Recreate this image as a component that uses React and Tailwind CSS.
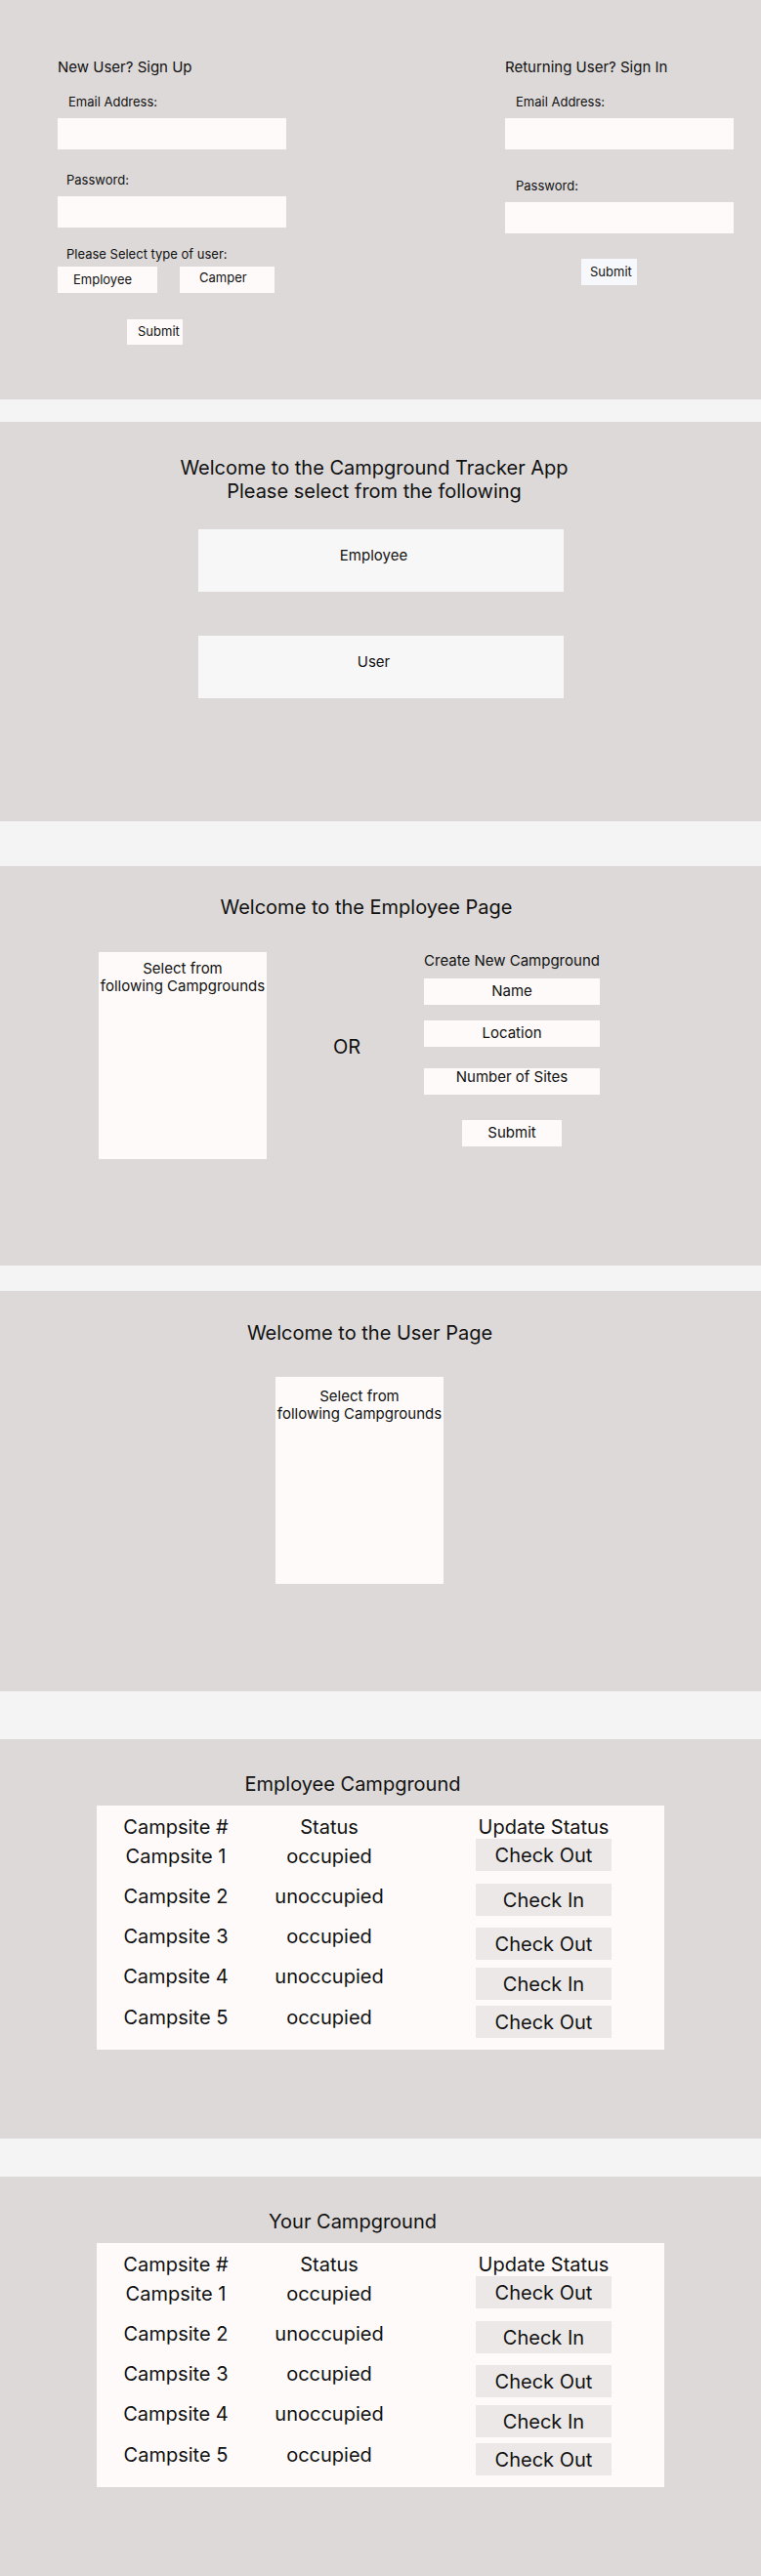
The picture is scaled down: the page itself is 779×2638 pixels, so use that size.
const rows = [
  { site: 'Campsite 1', status: 'occupied', action: 'Check Out', mt: 'mt-0', tmt: 'mt-[6px]' },
  { site: 'Campsite 2', status: 'unoccupied', action: 'Check In', mt: 'mt-[13px]', tmt: 'mt-[1px]' },
  { site: 'Campsite 3', status: 'occupied', action: 'Check Out', mt: 'mt-[12px]', tmt: '-mt-[3px]' },
  { site: 'Campsite 4', status: 'unoccupied', action: 'Check In', mt: 'mt-[8px]', tmt: '-mt-[3px]' },
  { site: 'Campsite 5', status: 'occupied', action: 'Check Out', mt: 'mt-[6px]', tmt: 'mt-0' },
]

function CampTable({ title }) {
  return (
    <section className="h-[409px] bg-[#dcd9d8] pt-[34px]">
      <h2 className="text-center pr-[57px] text-[20px] leading-[24px]">{title}</h2>
      <div className="mt-[10px] ml-[99px] w-[581px] h-[250px] bg-[#fdfaf9] flex flex-col">
        <div className="mt-[10px] flex text-[20px] leading-[24px]">
          <div className="w-[162px] text-center">Campsite #</div>
          <div className="w-[152px] text-center">Status</div>
          <div className="ml-[74px] w-[139px] text-center">Update Status</div>
        </div>
        {rows.map((r) => (
          <div key={r.site} className={`${r.mt} flex items-start text-[20px] leading-[24px]`}>
            <div className={`${r.tmt} w-[162px] text-center`}>{r.site}</div>
            <div className={`${r.tmt} w-[152px] text-center`}>{r.status}</div>
            <button className="ml-[74px] w-[139px] h-[33px] bg-[#ebe8e7] text-center">{r.action}</button>
          </div>
        ))}
      </div>
    </section>
  )
}

export default function App() {
  return (
    <div className="w-[779px] font-['Inter',sans-serif] text-[#111111] bg-[#f4f4f4]">
      {/* sign up / sign in */}
      <section className="h-[409px] bg-[#dcd9d8] flex pt-[57px]">
        <div className="ml-[59px] w-[234px] flex flex-col items-start">
          <h2 className="text-[15px] leading-[24px]">New User? Sign Up</h2>
          <label className="mt-[13px] ml-[11px] text-[13px] leading-[20px]">Email Address:</label>
          <div className="mt-[7px] h-[32px] w-full bg-[#fdfaf9]" />
          <label className="mt-[21px] ml-[9px] text-[13px] leading-[20px]">Password:</label>
          <div className="mt-[7px] h-[32px] w-full bg-[#fdfaf9]" />
          <label className="mt-[17px] ml-[9px] text-[13px] leading-[20px]">Please Select type of user:</label>
          <div className="mt-[3px] flex gap-[23px] text-[13px]">
            <button className="w-[102px] h-[27px] pl-[16px] text-left bg-[#fdfaf9]">Employee</button>
            <button className="w-[97px] h-[27px] pl-[20px] pb-[4px] text-left bg-[#fdfaf9]">Camper</button>
          </div>
          <button className="mt-[27px] ml-[71px] w-[57px] h-[26px] pl-[11px] text-left text-[13px] bg-[#fdfaf9]">Submit</button>
        </div>
        <div className="ml-[224px] w-[234px] flex flex-col items-start">
          <h2 className="text-[15px] leading-[24px]">Returning User? Sign In</h2>
          <label className="mt-[13px] ml-[11px] text-[13px] leading-[20px]">Email Address:</label>
          <div className="mt-[7px] h-[32px] w-full bg-[#fdfaf9]" />
          <label className="mt-[27px] ml-[11px] text-[13px] leading-[20px]">Password:</label>
          <div className="mt-[7px] h-[32px] w-full bg-[#fdfaf9]" />
          <button className="mt-[26px] ml-[78px] w-[57px] h-[27px] pl-[9px] text-left text-[13px] bg-[#f7f8fc]">Submit</button>
        </div>
      </section>
      <div className="h-[23px]" />

      {/* landing */}
      <section className="h-[409px] bg-[#dcd9d8] pt-[35px]">
        <h1 className="text-center pr-[13px] text-[20px] leading-[24px]">
          Welcome to the Campground Tracker App
          <br />
          Please select from the following
        </h1>
        <button className="mt-[27px] mx-auto block w-[374px] h-[64px] bg-[#f8f7f7] pt-[15px] pr-[14px] text-[15px] leading-[24px] text-center">
          <span className="block">Employee</span>
          <span className="block h-[25px]" />
        </button>
        <button className="mt-[45px] mx-auto block w-[374px] h-[64px] bg-[#f8f7f7] pt-[15px] pr-[14px] text-[15px] leading-[24px] text-center">
          <span className="block">User</span>
          <span className="block h-[25px]" />
        </button>
      </section>
      <div className="h-[46px]" />

      {/* employee page */}
      <section className="h-[409px] bg-[#dcd9d8] pt-[30px]">
        <h1 className="text-center pr-[29px] text-[20px] leading-[24px]">Welcome to the Employee Page</h1>
        <div className="mt-[33px] flex items-start">
          <div className="mt-[1px] ml-[101px] w-[172px] h-[212px] bg-[#fdfaf9] pt-[8px] text-center text-[15px] leading-[18px]">
            Select from
            <br />
            following Campgrounds
          </div>
          <div className="mt-[86px] ml-[68px] w-[28px] text-[20px] leading-[24px]">OR</div>
          <div className="ml-[65px] w-[180px] flex flex-col text-[15px]">
            <div className="leading-[20px] text-center">Create New Campground</div>
            <div className="mt-[8px] h-[27px] bg-[#fdfaf9] flex items-center justify-center">Name</div>
            <div className="mt-[16px] h-[27px] bg-[#fdfaf9] flex items-center justify-center">Location</div>
            <div className="mt-[22px] h-[27px] bg-[#fdfaf9] text-center leading-[18px]">Number of Sites</div>
            <button className="mt-[26px] self-center w-[102px] h-[27px] bg-[#fdfaf9]">Submit</button>
          </div>
        </div>
      </section>
      <div className="h-[26px]" />

      {/* user page */}
      <section className="h-[410px] bg-[#dcd9d8] pt-[31px]">
        <h1 className="text-center pr-[22px] text-[20px] leading-[24px]">Welcome to the User Page</h1>
        <div className="mt-[33px] ml-[282px] w-[172px] h-[212px] bg-[#fdfaf9] pt-[11px] text-center text-[15px] leading-[18px]">
          Select from
          <br />
          following Campgrounds
        </div>
      </section>
      <div className="h-[49px]" />

      <CampTable title="Employee Campground" />
      <div className="h-[39px]" />
      <CampTable title="Your Campground" />
    </div>
  )
}
